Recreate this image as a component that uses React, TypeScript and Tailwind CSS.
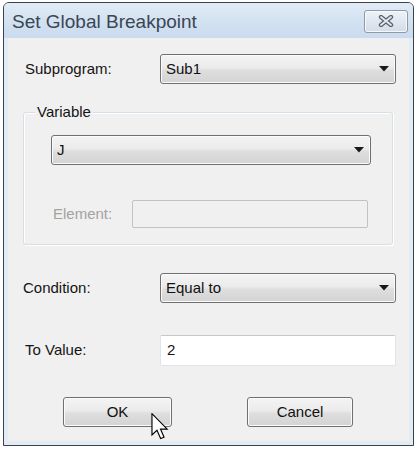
import React from "react";

const font = { fontFamily: '"Liberation Sans", Arial, sans-serif' };

function Arrow() {
  return (
    <svg width="10" height="6" viewBox="0 0 10 6">
      <polygon points="0,0 10,0 5,5.5" fill="#1a1a1a" />
    </svg>
  );
}

function Combo({ value, width }: { value: string; width: string }) {
  return (
    <div
      className={`${width} h-[30px] flex items-center justify-between pl-[5px] pr-[6px] rounded-[3px] border border-[#707070] bg-[linear-gradient(to_bottom,#f4f4f4_0%,#ebebeb_45%,#dedede_55%,#d3d3d3_100%)] shadow-[inset_0_0_0_1px_#fbfbfb] text-[15px] text-[#111]`}
    >
      <span>{value}</span>
      <Arrow />
    </div>
  );
}

function Button({ label, width }: { label: string; width: string }) {
  return (
    <div
      className={`${width} h-[30px] flex items-center justify-center rounded-[3px] border border-[#707070] bg-[linear-gradient(to_bottom,#f4f4f4_0%,#ebebeb_45%,#dedede_55%,#d3d3d3_100%)] shadow-[inset_0_0_0_1px_#fbfbfb] text-[15px] text-[#111]`}
    >
      {label}
    </div>
  );
}

export default function App() {
  return (
    <div className="relative w-[417px] h-[449px] bg-white pt-[2px] pl-[3px]" style={font}>
      <div className="w-[411px] h-[444px] border border-[#3a434d] rounded-t-[6px] bg-[#e3ebf5] flex flex-col overflow-hidden">
        {/* Title bar */}
        <div className="h-[35px] shrink-0 flex items-center justify-between pl-[8px] pr-[5px] bg-[linear-gradient(to_bottom,#e1ebf6_0%,#d3e2f1_50%,#c9dbee_100%)]">
          <span className="text-[19px] text-[#3b4654] leading-none mt-[1px]">Set Global Breakpoint</span>
          <div className="w-[44px] h-[23px] mt-[1px] flex items-center justify-center rounded-[3px] border border-[#8f9aa6] bg-[linear-gradient(to_bottom,#eef3f8_0%,#dfe7f0_50%,#d3dde8_100%)] shadow-[inset_0_0_0_1px_#f6f9fc]">
            <svg width="16" height="12" viewBox="0 0 16 12">
              <path d="M3 2 L13 10 M13 2 L3 10" stroke="#59636f" strokeWidth="4.4" strokeLinecap="round" />
              <path d="M3 2 L13 10 M13 2 L3 10" stroke="#e4e9ef" strokeWidth="1.8" strokeLinecap="round" />
            </svg>
          </div>
        </div>

        {/* Client area */}
        <div className="flex-1 mx-[4px] mb-[4px] bg-[#f0f0f0] flex flex-col text-[15px] text-[#141414]">
          <div className="mt-[16px] ml-[17px] flex items-center h-[30px]">
            <span className="w-[135px]">Subprogram:</span>
            <Combo value="Sub1" width="w-[236px]" />
          </div>

          <div className="relative mt-[28px] ml-[15px] w-[370px] h-[133px] rounded-[3px] border border-[#d5dfe5] shadow-[inset_1px_1px_0_#ffffff,1px_1px_0_#ffffff] pt-[22px] pl-[27px]">
            <span className="absolute -top-[10px] left-[11px] px-[2px] bg-[#f0f0f0] leading-[18px]">Variable</span>
            <Combo value="J" width="w-[320px]" />
            <div className="mt-[35px] ml-[2px] flex items-center h-[28px]">
              <span className="w-[79px] text-[#a3a3a3]">Element:</span>
              <div className="w-[236px] h-[28px] border border-[#c2c2c2] rounded-[2px] bg-[#f0f0f0]" />
            </div>
          </div>

          <div className="mt-[28px] ml-[15px] flex items-center h-[30px]">
            <span className="w-[137px]">Condition:</span>
            <Combo value="Equal to" width="w-[236px]" />
          </div>

          <div className="mt-[32px] ml-[17px] flex items-center h-[31px]">
            <span className="w-[135px]">To Value:</span>
            <div className="w-[236px] h-[31px] flex items-center pl-[6px] bg-white border border-[#e2e3ea] border-t-[#c5c8cf] rounded-[2px]">
              2
            </div>
          </div>

          <div className="mt-[31px] ml-[55px] flex items-center">
            <Button label="OK" width="w-[109px]" />
            <div className="ml-[75px]">
              <Button label="Cancel" width="w-[106px]" />
            </div>
          </div>
        </div>
      </div>

      {/* Mouse cursor */}
      <svg className="absolute left-[151px] top-[413px]" width="19" height="27" viewBox="0 0 13 19">
        <path
          d="M0.5 0.5 L0.5 15.5 L4 12.2 L6.6 18 L9 17 L6.5 11.3 L11.2 11.3 Z"
          fill="#ffffff"
          stroke="#000000"
          strokeWidth="0.8"
          strokeLinejoin="miter"
        />
      </svg>
    </div>
  );
}
